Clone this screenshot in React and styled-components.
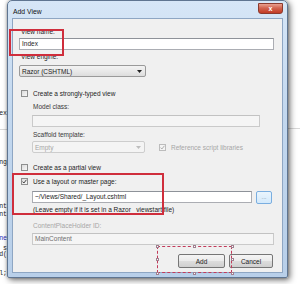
import React from 'react';
import styled, { createGlobalStyle, css } from 'styled-components';

const GlobalStyle = createGlobalStyle`
  html, body {
    margin: 0;
    padding: 0;
    background: #ffffff;
    overflow: hidden;
  }
  body {
    font-family: "Liberation Sans", Arial, sans-serif;
    font-size: 6.5px;
    color: #1c1c1c;
  }
`;

const Page = styled.div`
  display: flex;
  width: 300px;
  height: 284px;
`;

const CodeStrip = styled.div`
  width: 7px;
  flex-shrink: 0;
  display: flex;
  flex-direction: column;
  align-items: flex-end;
  overflow: hidden;
  font-family: "Liberation Mono", monospace;
  font-size: 6.5px;
  line-height: 8px;
  color: #222;
`;

const CodeLine = styled.div`
  height: 8px;
  white-space: nowrap;
  color: ${(p) => (p.$blue ? '#2b2bb8' : '#222')};
`;

const CodeRule = styled.div`
  align-self: stretch;
  height: 1px;
  background: #d8d8d8;
`;

const RightStrip = styled.div`
  flex: 1;
  display: flex;
  flex-direction: column;
`;

const Window = styled.div`
  position: relative;
  z-index: 1;
  width: 281px;
  height: 278px;
  flex-shrink: 0;
  box-sizing: border-box;
  display: flex;
  flex-direction: column;
  border: 1px solid #5f7591;
  border-radius: 5px 5px 2px 2px;
  background: linear-gradient(180deg, #d6e6f7 0%, #c3d8ef 40%, #b8cfe9 100%);
  box-shadow: 2px 2px 6px rgba(0, 0, 0, 0.55), 0 0 3px rgba(0, 0, 0, 0.3);
  padding: 0 4px 4px 4px;
`;

const TitleBar = styled.div`
  height: 17px;
  box-sizing: border-box;
  display: flex;
  align-items: center;
  justify-content: space-between;
  padding-left: 1px;
  flex-shrink: 0;
`;

const Title = styled.div`
  font-size: 6.8px;
  color: #111;
  padding-top: 3px;
`;

const CloseButton = styled.div`
  align-self: flex-start;
  margin-top: 2px;
  width: 25px;
  height: 11px;
  box-sizing: border-box;
  border: 1px solid #8b3a2e;
  border-radius: 0 0 3px 3px;
  background: linear-gradient(180deg, #e9a08f 0%, #d26450 45%, #c23b25 100%);
  color: #fff;
  font-size: 7px;
  font-weight: bold;
  display: flex;
  align-items: center;
  justify-content: center;
  line-height: 1;
`;

const Client = styled.div`
  flex: 1;
  background: #f0f0f0;
  border: 1px solid #8ea6c3;
  display: flex;
  flex-direction: column;
  padding: 9px 8px 0 6px;
`;

const Label = styled.div`
  height: 8px;
  line-height: 8px;
  padding-left: ${(p) => (p.$pad ? p.$pad : 2)}px;
  margin-top: ${(p) => p.$gap || 0}px;
  color: ${(p) => (p.$disabled ? '#a6a6a6' : p.$muted ? '#3a3a3a' : '#1c1c1c')};
  white-space: nowrap;
`;

const TextBox = styled.div`
  height: 12px;
  box-sizing: border-box;
  width: ${(p) => (p.$width ? `${p.$width}px` : 'auto')};
  margin-top: ${(p) => p.$gap || 0}px;
  border: 1px solid ${(p) => (p.$disabled ? '#cacaca' : '#abadb3')};
  border-top-color: ${(p) => (p.$disabled ? '#c2c2c2' : '#8e9299')};
  background: ${(p) => (p.$disabled ? '#f5f5f5' : '#ffffff')};
  color: ${(p) => (p.$disabled ? '#6e6e6e' : '#1c1c1c')};
  padding-left: 2px;
  line-height: 10px;
  white-space: nowrap;
  overflow: hidden;
`;

const Select = styled.div`
  height: 12px;
  box-sizing: border-box;
  width: ${(p) => p.$width}px;
  margin-top: ${(p) => p.$gap || 0}px;
  border: 1px solid ${(p) => (p.$disabled ? '#cdcdcd' : '#9a9a9a')};
  border-radius: 2px;
  background: ${(p) =>
    p.$disabled
      ? '#f4f4f4'
      : 'linear-gradient(180deg, #f3f3f3 0%, #e9e9e9 50%, #dddddd 100%)'};
  color: ${(p) => (p.$disabled ? '#a6a6a6' : '#1c1c1c')};
  display: flex;
  align-items: center;
  justify-content: space-between;
  padding: 0 3px 0 2px;
  white-space: nowrap;
  flex-shrink: 0;
`;

const Arrow = ({ color }) => (
  <svg width="5" height="3" viewBox="0 0 5 3">
    <path d="M0 0 L5 0 L2.5 3 Z" fill={color} />
  </svg>
);

const CheckRow = styled.div`
  display: flex;
  align-items: center;
  height: 8px;
  margin-top: ${(p) => p.$gap || 0}px;
  margin-left: ${(p) => p.$indent || 0}px;
  gap: 5px;
  color: ${(p) => (p.$disabled ? '#a6a6a6' : '#1c1c1c')};
  white-space: nowrap;
`;

const Box = styled.div`
  width: 7px;
  height: 7px;
  box-sizing: border-box;
  margin-left: 2px;
  border: 1px solid ${(p) => (p.$disabled ? '#bcbcbc' : '#8e8f8f')};
  background: ${(p) =>
    p.$disabled ? '#f4f4f4' : 'linear-gradient(135deg, #dcdcdc 0%, #f7f7f7 100%)'};
  display: flex;
  align-items: center;
  justify-content: center;
`;

const Check = ({ color }) => (
  <svg width="5" height="5" viewBox="0 0 5 5">
    <path d="M0.6 2.6 L1.9 4 L4.4 0.8" fill="none" stroke={color} strokeWidth="0.9" />
  </svg>
);

const Indent = styled.div`
  display: flex;
  flex-direction: column;
  margin-left: ${(p) => p.$by}px;
`;

const Row = styled.div`
  display: flex;
  align-items: ${(p) => p.$align || 'center'};
  gap: ${(p) => p.$gap || 0}px;
  margin-top: ${(p) => p.$top || 0}px;
`;

const BrowseButton = styled.div`
  width: 16px;
  height: 13px;
  box-sizing: border-box;
  border: 1px solid #7aaee0;
  border-radius: 2px;
  background: linear-gradient(180deg, #eaf5fd 0%, #d3e9fb 100%);
  color: #7a8a9c;
  font-size: 6px;
  display: flex;
  align-items: center;
  justify-content: center;
  line-height: 1;
  padding-bottom: 1px;
`;

const Hint = styled.div`
  height: 8px;
  line-height: 8px;
  margin-top: 2px;
  padding-left: 1px;
  white-space: nowrap;
  color: #1c1c1c;
`;

const Footer = styled.div`
  display: flex;
  justify-content: flex-end;
  gap: 4px;
  margin-top: 9px;
  margin-right: 1px;
`;

const Button = styled.div`
  width: ${(p) => p.$width}px;
  height: 14px;
  box-sizing: border-box;
  border: 1px solid #767676;
  border-radius: 2px;
  background: linear-gradient(180deg, #f5f5f5 0%, #ebebeb 48%, #dddddd 52%, #cfcfcf 100%);
  display: flex;
  align-items: center;
  justify-content: center;
  color: #1c1c1c;
`;

const Highlight = styled.div`
  position: absolute;
  box-sizing: border-box;
  border: 2px solid #cf2e3c;
  pointer-events: none;
`;

const DashedHighlight = styled.div`
  position: absolute;
  box-sizing: border-box;
  border: 1.5px dashed #c23a5a;
  pointer-events: none;
`;

const Handle = styled.div`
  position: absolute;
  width: 3px;
  height: 3px;
  box-sizing: border-box;
  background: #fff;
  border: 1px solid #a08090;
`;

const codeLines = [
  { gap: 110, text: 'ex' },
  { gap: 11, rule: true },
  { gap: 29, text: 'ng' },
  { gap: 36, text: 'nt' },
  { gap: 0, text: 'nt' },
  { gap: 16, text: 'ne', blue: true },
  { gap: 2, text: 's' },
  { gap: -2, text: 'd(' },
  { gap: 11, text: 'l;' },
];

const handleSpots = [
  [0, 0],
  [0.5, 0],
  [1, 0],
  [0, 0.5],
  [1, 0.5],
  [0, 1],
  [0.5, 1],
  [1, 1],
];

export default function App() {
  const dash = { left: 149, top: 245, width: 75, height: 27 };

  return (
    <Page>
      <GlobalStyle />
      <CodeStrip>
        {codeLines.map((line, i) =>
          line.rule ? (
            <CodeRule key={i} style={{ marginTop: line.gap }} />
          ) : (
            <CodeLine key={i} $blue={line.blue} style={{ marginTop: line.gap }}>
              {line.text}
            </CodeLine>
          )
        )}
      </CodeStrip>

      <Window>
        <TitleBar>
          <Title>Add View</Title>
          <CloseButton>x</CloseButton>
        </TitleBar>
        <Client>
          <Label>View name:</Label>
          <TextBox $gap={2}>Index</TextBox>

          <Label $gap={3}>View engine:</Label>
          <Select $width={127} $gap={4}>
            <span>Razor (CSHTML)</span>
            <Arrow color="#222" />
          </Select>

          <CheckRow $gap={12}>
            <Box />
            <span>Create a strongly-typed view</span>
          </CheckRow>

          <Indent $by={13}>
            <Label $gap={6} $pad={1} $muted>
              Model class:
            </Label>
            <TextBox $gap={4} $width={228} $disabled />
            <Label $gap={4} $pad={1} $muted>
              Scaffold template:
            </Label>
            <Row $top={2} $gap={12}>
              <Select $width={113} $disabled>
                <span>Empty</span>
                <Arrow color="#bdbdbd" />
              </Select>
              <CheckRow $disabled>
                <Box $disabled>
                  <Check color="#a8a8a8" />
                </Box>
                <span>Reference script libraries</span>
              </CheckRow>
            </Row>
          </Indent>

          <CheckRow $gap={10}>
            <Box />
            <span>Create as a partial view</span>
          </CheckRow>
          <CheckRow $gap={6}>
            <Box>
              <Check color="#333" />
            </Box>
            <span>Use a layout or master page:</span>
          </CheckRow>

          <Indent $by={13}>
            <Row $top={6} $gap={4} $align="flex-start">
              <TextBox $width={220}>~/Views/Shared/_Layout.cshtml</TextBox>
              <BrowseButton>...</BrowseButton>
            </Row>
            <Hint>(Leave empty if it is set in a Razor _viewstart file)</Hint>
            <Label $gap={8} $pad={1} $disabled>
              ContentPlaceHolder ID:
            </Label>
            <TextBox $gap={3} $disabled>
              MainContent
            </TextBox>
          </Indent>

          <Footer>
            <Button $width={47}>Add</Button>
            <Button $width={44}>Cancel</Button>
          </Footer>
        </Client>

        <Highlight style={{ left: 1, top: 28, width: 55, height: 27 }} />
        <Highlight style={{ left: 4, top: 172, width: 152, height: 42 }} />
        <DashedHighlight style={dash} />
        {handleSpots.map(([fx, fy], i) => (
          <Handle
            key={i}
            style={{
              left: dash.left + fx * dash.width - 1.5,
              top: dash.top + fy * dash.height - 1.5,
            }}
          />
        ))}
      </Window>

      <RightStrip>
        <CodeRule style={{ marginTop: 128 }} />
      </RightStrip>
    </Page>
  );
}
